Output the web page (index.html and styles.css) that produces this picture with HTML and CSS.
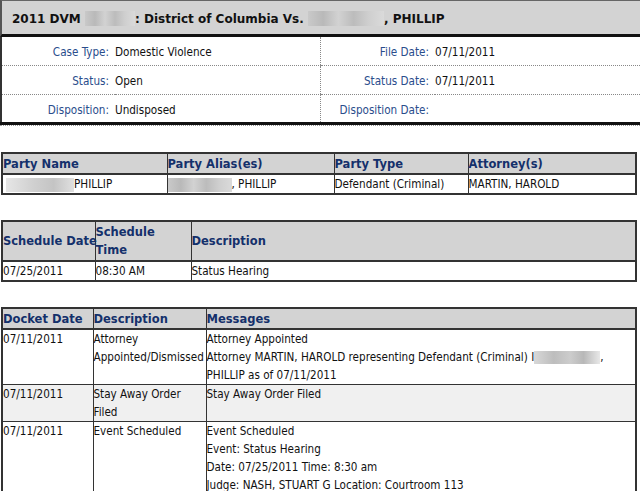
FILE: index.html
```html
<!DOCTYPE html>
<html>
<head>
<meta charset="utf-8">
<link rel="stylesheet" href="styles.css">
</head>
<body>
<div class="page">
  <div class="title">2011 DVM <span class="blur b-title1"></span>: District of Columbia Vs. <span class="blur b-title2"></span>, PHILLIP</div>
  <div class="info-wrap">
    <table class="info">
      <colgroup><col class="c1"><col class="c2"><col class="c3"><col class="c4"></colgroup>
      <tr><td class="lbl">Case Type:</td><td class="val">Domestic Violence</td><td class="lbl split">File Date:</td><td class="val">07/11/2011</td></tr>
      <tr><td class="lbl">Status:</td><td class="val">Open</td><td class="lbl split">Status Date:</td><td class="val">07/11/2011</td></tr>
      <tr class="last"><td class="lbl">Disposition:</td><td class="val">Undisposed</td><td class="lbl split">Disposition Date:</td><td class="val"></td></tr>
    </table>
  </div>

  <table class="grid party">
    <colgroup><col class="p1"><col class="p2"><col class="p3"><col class="p4"></colgroup>
    <tr><th>Party Name</th><th>Party Alias(es)</th><th>Party Type</th><th>Attorney(s)</th></tr>
    <tr><td><span class="blur b-name"></span>PHILLIP</td><td><span class="blur b-alias"></span>, PHILLIP</td><td>Defendant (Criminal)</td><td>MARTIN, HAROLD</td></tr>
  </table>

  <table class="grid sched">
    <colgroup><col class="s1"><col class="s2"><col class="s3"></colgroup>
    <tr><th>Schedule Date</th><th>Schedule<br>Time</th><th>Description</th></tr>
    <tr><td>07/25/2011</td><td>08:30 AM</td><td>Status Hearing</td></tr>
  </table>

  <table class="grid docket">
    <colgroup><col class="d1"><col class="d2"><col class="d3"></colgroup>
    <tr><th>Docket Date</th><th>Description</th><th>Messages</th></tr>
    <tr><td>07/11/2011</td><td>Attorney<br>Appointed/Dismissed</td><td>Attorney Appointed<br>Attorney MARTIN, HAROLD representing Defendant (Criminal) I<span class="blur b-msg"></span>,<br>PHILLIP as of 07/11/2011</td></tr>
    <tr class="alt"><td>07/11/2011</td><td>Stay Away Order<br>Filed</td><td>Stay Away Order Filed</td></tr>
    <tr><td>07/11/2011</td><td>Event Scheduled</td><td>Event Scheduled<br>Event: Status Hearing<br>Date: 07/25/2011 Time: 8:30 am<br>Judge: NASH, STUART G Location: Courtroom 113</td></tr>
  </table>
</div>
</body>
</html>
```

FILE: styles.css
```css
html, body {
  margin: 0;
  padding: 0;
  background: #ffffff;
  overflow: hidden;
}
body {
  font-family: "DejaVu Sans Condensed", "DejaVu Sans", sans-serif;
  font-size: 11.6px;
  color: #111;
}
.page {
  width: 640px;
  overflow: hidden;
}
.title {
  width: 660px;
  height: 33px;
  line-height: 36px;
  background: #d3d3d3;
  border-top: 1px solid #666;
  border-left: 2px solid #555;
  border-bottom: 3px solid #111;
  padding-left: 10px;
  font-family: "DejaVu Sans", sans-serif;
  font-weight: bold;
  font-size: 12px;
  color: #111;
  white-space: nowrap;
}
.blur {
  display: inline-block;
  vertical-align: middle;
  background: linear-gradient(90deg, #c9c9c9 0%, #b9b9b9 20%, #d2d2d2 40%, #bcbcbc 60%, #cfcfcf 80%, #dadada 100%);
}
.b-title1 { width: 50px; height: 15px; margin-top: -2px; }
.b-title2 { width: 76px; height: 15px; margin-top: -2px; }
.b-name { width: 68px; height: 14px; margin-left: 3px; background: linear-gradient(90deg, #e6e6e6, #d0d0d0 40%, #c4c4c4 70%, #e0e0e0); }
.b-alias { width: 64px; height: 14px; }
.b-msg { width: 66px; height: 13px; background: linear-gradient(90deg, #d8d8d8, #bdbdbd 30%, #cccccc 55%, #b8b8b8 75%, #e8e8e8); }

.info-wrap {
  width: 660px;
  border-bottom: 1px dotted #999;
}
.info {
  width: 660px;
  border-collapse: collapse;
  border-left: 2px solid #333;
  border-bottom: 3px solid #111;
  table-layout: fixed;
}
.info col.c1 { width: 114px; }
.info col.c2 { width: 205px; }
.info col.c3 { width: 115px; }
.info col.c4 { width: auto; }
.info td {
  height: 26px;
  padding: 2px 0 0 0;
  border-bottom: 1px dotted #888;
  white-space: nowrap;
}
.info tr.last td { border-bottom: none; height: 25px; }
.info td.lbl {
  text-align: right;
  color: #2a4d8c;
  padding-right: 6px;
}
.info td.split { border-left: 1px dotted #888; }
.info td.val { color: #111; }

.grid {
  border-collapse: collapse;
  table-layout: fixed;
  width: 636px;
  margin-left: 1px;
  border: 2px solid #333;
}
.grid th, .grid td {
  border: 1px solid #333;
  padding: 0 1px 0 0;
  text-align: left;
  white-space: nowrap;
}
.grid th {
  background: #d3d3d3;
  color: #14306b;
  font-family: "DejaVu Sans", sans-serif;
  font-weight: bold;
  font-size: 11.5px;
  line-height: 18px;
  height: 19px;
  border-bottom: 2px solid #333;
  vertical-align: middle;
}
.grid td {
  line-height: 18px;
  vertical-align: top;
}
.party { margin-top: 26px; }
.party col.p1 { width: 165px; }
.party col.p2 { width: 167px; }
.party col.p3 { width: 134px; }
.party col.p4 { width: auto; }
.party td { height: 18px; }

.sched { margin-top: 25px; }
.sched col.s1 { width: 93px; }
.sched col.s2 { width: 96px; }
.sched col.s3 { width: auto; }
.sched th { height: 38px; }
.sched td { height: 18px; line-height: 18px; }

.docket { margin-top: 25px; }
.docket col.d1 { width: 91px; }
.docket col.d2 { width: 113px; }
.docket col.d3 { width: auto; }
.docket tr.alt td { background: #f0f0f0; }
```
